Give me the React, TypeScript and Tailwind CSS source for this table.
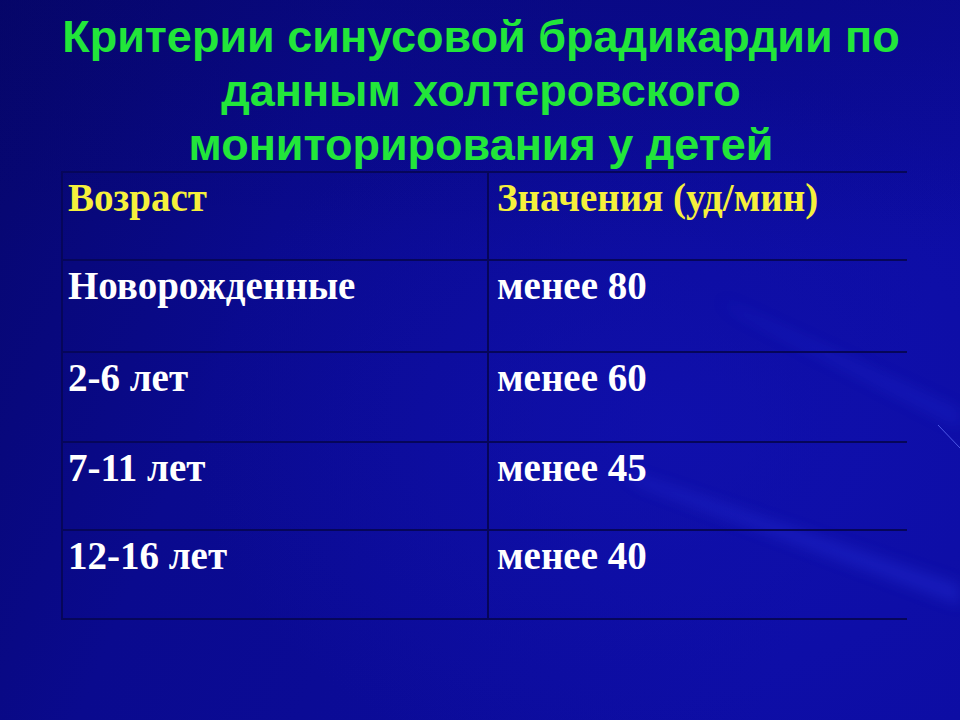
const rows = [
  { age: "Возраст", value: "Значения (уд/мин)", head: true, h: "h-[88px]" },
  { age: "Новорожденные", value: "менее 80", h: "h-[92px]" },
  { age: "2-6 лет", value: "менее 60", h: "h-[90px]" },
  { age: "7-11 лет", value: "менее 45", h: "h-[88px]" },
  { age: "12-16 лет", value: "менее 40", h: "h-[89px]" },
]

function Backdrop() {
  // background streaks of the slide template
  return (
    <svg className="absolute inset-0 h-full w-full" viewBox="0 0 960 720" preserveAspectRatio="none">
      <defs>
        <linearGradient id="base" x1="0" y1="0" x2="1" y2="0.3">
          <stop offset="0" stopColor="#06066c" />
          <stop offset="0.35" stopColor="#0a0a8e" />
          <stop offset="1" stopColor="#0d0da4" />
        </linearGradient>
        <linearGradient id="top" x1="0" y1="0" x2="0" y2="1">
          <stop offset="0" stopColor="#050560" stopOpacity="0.3" />
          <stop offset="0.35" stopColor="#050560" stopOpacity="0" />
        </linearGradient>
        <radialGradient id="glow" cx="0.7" cy="0.6" r="0.5">
          <stop offset="0" stopColor="#1212b4" stopOpacity="0.6" />
          <stop offset="1" stopColor="#1212b4" stopOpacity="0" />
        </radialGradient>
        <filter id="soft" x="-20%" y="-50%" width="140%" height="200%">
          <feGaussianBlur stdDeviation="7" />
        </filter>
      </defs>
      <rect width="960" height="720" fill="url(#base)" />
      <rect width="960" height="720" fill="url(#glow)" />
      <rect width="960" height="720" fill="url(#top)" />
      <g filter="url(#soft)" opacity="0.35">
        <path d="M620 470 L960 585 L960 605 L640 485 Z" fill="#2a36e0" />
        <path d="M720 300 L960 410 L960 428 L740 315 Z" fill="#1e28cc" />
      </g>
      <path d="M938 425 L960 448" stroke="#6a78ff" strokeWidth="1" opacity="0.7" />
    </svg>
  )
}

export default function App() {
  return (
    <div className="relative h-[720px] w-[960px] overflow-hidden bg-[#0a0a8c]">
      <Backdrop />
      <div className="relative flex flex-col items-center">
        <h1 className="pl-[2px] pt-[10px] text-center font-['Liberation_Sans',Arial,sans-serif] text-[45px] font-bold leading-[54px] text-[#22e63a]">
          Критерии синусовой брадикардии по
          <br />
          данным холтеровского
          <br />
          мониторирования у детей
        </h1>
        <div className="ml-[8px] mt-[-1px] grid w-[846px] grid-cols-[426px_1fr] border-t-2 border-l-2 border-[#06065a] font-['Liberation_Serif','Times_New_Roman',serif] text-[39px] font-bold leading-none">
          {rows.map((r) => (
            <div key={r.age} className="contents">
              <div
                className={`${r.h} border-b-2 border-r-2 border-[#06065a] pl-[5px] pt-[5px] ${
                  r.head ? "text-[#f5f03c]" : "text-white"
                }`}
              >
                {r.age}
              </div>
              <div
                className={`${r.h} border-b-2 border-[#06065a] pl-[8px] pt-[5px] ${
                  r.head ? "text-[#f5f03c]" : "text-white"
                }`}
              >
                {r.value}
              </div>
            </div>
          ))}
        </div>
      </div>
    </div>
  )
}
